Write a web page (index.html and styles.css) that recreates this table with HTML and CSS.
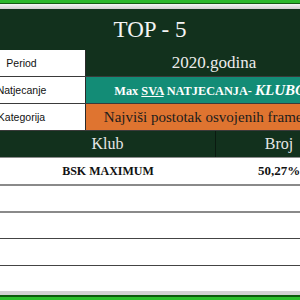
FILE: index.html
```html
<!DOCTYPE html>
<html>
<head>
<meta charset="utf-8">
<link rel="stylesheet" href="styles.css">
</head>
<body>
<div class="sheet">
  <div class="topbar"></div>
  <div class="strip"></div>
  <div class="title">TOP - 5</div>
  <div class="info">
    <div class="irow">
      <div class="label"><span>Period</span></div>
      <div class="val dark">2020.godina</div>
    </div>
    <div class="irow">
      <div class="label"><span>Natjecanje</span></div>
      <div class="val teal"><span class="tline">Max <u>SVA</u> NATJECANJA- <span class="bi">KLUBOVI</span></span></div>
    </div>
    <div class="irow">
      <div class="label"><span>Kategorija</span></div>
      <div class="val orange">Najviši postotak osvojenih frameova</div>
    </div>
  </div>
  <div class="table">
    <div class="trow head"><div class="c1">Klub</div><div class="c2">Broj</div></div>
    <div class="trow r1"><div class="c1">BSK MAXIMUM</div><div class="c2">50,27%</div></div>
    <div class="trow r2"><div class="c1"></div><div class="c2"></div></div>
    <div class="trow r3"><div class="c1"></div><div class="c2"></div></div>
    <div class="trow r4"><div class="c1"></div><div class="c2"></div></div>
    <div class="trow r5"><div class="c1"></div><div class="c2"></div></div>
  </div>
  <div class="foot-grey"></div>
  <div class="foot-dark"></div>
  <div class="foot-green"></div>
</div>
</body>
</html>
```
FILE: styles.css
```css
html, body {
  margin: 0;
  padding: 0;
  background: #ffffff;
}
.sheet {
  width: 300px;
  height: 300px;
  overflow: hidden;
  display: flex;
  flex-direction: column;
  font-family: "Liberation Serif", "Times New Roman", serif;
}
.topbar {
  height: 3px;
  flex: none;
  background: #2cb82c;
  border-bottom: 1px solid #135a13;
}
.strip {
  height: 5px;
  flex: none;
  background: linear-gradient(#f6f6f6, #cfcfcf);
}
.title {
  height: 41px;
  flex: none;
  background: #12311d;
  color: #f4f4f4;
  font-size: 23px;
  display: flex;
  align-items: center;
  justify-content: center;
}
.irow {
  display: flex;
  height: 26px;
  border-bottom: 1px solid #3a3a3a;
}
.label {
  width: 86px;
  flex: none;
  box-sizing: border-box;
  padding-right: 42px;
  border-right: 1px solid #2a2a2a;
  background: #ffffff;
  display: flex;
  align-items: center;
  justify-content: center;
  font-family: "Liberation Sans", Arial, sans-serif;
  font-size: 10.5px;
  color: #111;
  white-space: nowrap;
}
.val {
  width: 256px;
  flex: none;
  box-sizing: border-box;
  display: flex;
  align-items: center;
  justify-content: center;
  white-space: nowrap;
}
.dark {
  background: #12311d;
  color: #ececec;
  font-size: 17px;
}
.teal {
  background: #138c76;
  color: #ffffff;
  font-weight: bold;
  font-size: 12.3px;
  padding-left: 8px;
}
.tline {
  white-space: pre;
}
.teal .bi {
  font-style: italic;
  font-size: 15px;
}
.orange {
  background: #df7430;
  color: #1c1c1c;
  font-size: 15px;
}
.trow {
  display: flex;
  height: 26px;
  flex: none;
}
.c1 {
  width: 216px;
  flex: none;
  display: flex;
  align-items: center;
  justify-content: center;
  white-space: nowrap;
  box-sizing: border-box;
}
.c2 {
  width: 126px;
  flex: none;
  display: flex;
  align-items: center;
  justify-content: center;
  white-space: nowrap;
}
.head {
  background: #12311d;
  color: #e6e6e6;
  font-size: 16px;
  border-bottom: 1px solid #8c8c8c;
}
.head .c1 {
  border-right: 1px solid #0a1a10;
}
.r1 {
  font-weight: bold;
  font-size: 12px;
  color: #111;
  border-bottom: 2px solid #8a8a8a;
}
.r1 .c2 {
  font-size: 13px;
}
.r2 {
  height: 25px;
  border-bottom: 2px solid #8a8a8a;
}
.r3 {
  height: 25px;
  border-bottom: 1px solid #444;
}
.r4 {
  border-bottom: 1px solid #444;
}
.r5 {
  height: 25px;
}
.foot-grey {
  height: 4px;
  flex: none;
  background: #d2d2d2;
}
.foot-dark {
  height: 2px;
  flex: none;
  background: #0c5a0c;
}
.foot-green {
  height: 3px;
  flex: none;
  background: #2cbf2c;
}
```
